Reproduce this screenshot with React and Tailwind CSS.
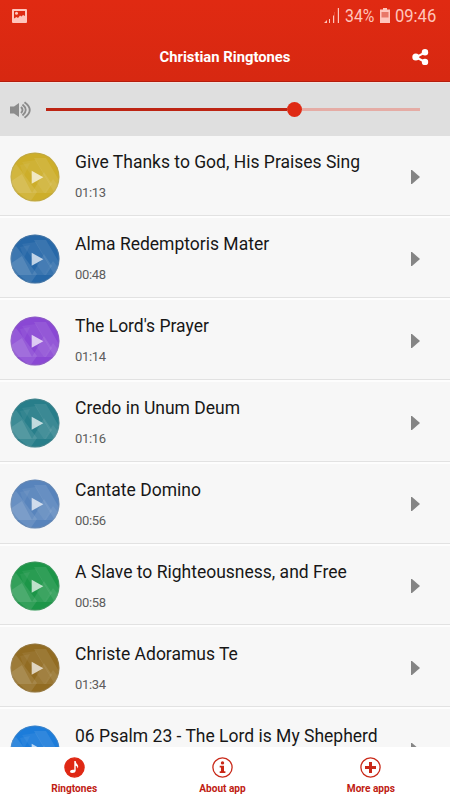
import React, { useState } from 'react';

const ringtones = [
  { title: 'Give Thanks to God, His Praises Sing', time: '01:13', color: '#cdae2a' },
  { title: 'Alma Redemptoris Mater', time: '00:48', color: '#2768a8' },
  { title: "The Lord's Prayer", time: '01:14', color: '#8a48d4' },
  { title: 'Credo in Unum Deum', time: '01:16', color: '#287e8a' },
  { title: 'Cantate Domino', time: '00:56', color: '#5884bc' },
  { title: 'A Slave to Righteousness, and Free', time: '00:58', color: '#1c9648' },
  { title: 'Christe Adoramus Te', time: '01:34', color: '#926c22' },
  { title: '06 Psalm 23 - The Lord is My Shepherd', time: '', color: '#1c7cda' },
];

function PlayButton({ color, id }) {
  return (
    <svg width="50" height="50" viewBox="0 0 50 50" className="shrink-0">
      <clipPath id={`disc-${id}`}>
        <circle cx="25" cy="25" r="24.5" />
      </clipPath>
      <g clipPath={`url(#disc-${id})`}>
        <rect width="50" height="50" fill={color} />
        <polygon points="0,18 6,12 27,40 20,50 10,42 0,30" fill="#fff" opacity="0.1" />
        <polygon points="0,30 12,22 22,41 0,41" fill="#fff" opacity="0.12" />
        <polygon points="24,6 36,6 50,30 50,40 44,40" fill="#fff" opacity="0.09" />
        <polygon points="12,10 26,8 40,32 34,41" fill="#fff" opacity="0.06" />
        <polygon points="22,41 34,20 42,32 36,41" fill="#fff" opacity="0.09" />
        <polygon points="34,41 43,27 50,36 48,41" fill="#fff" opacity="0.08" />
        <polygon points="10,13 20,11 14,24" fill="#fff" opacity="0.06" />
        <circle cx="25" cy="25" r="24" fill="none" stroke="#999" strokeWidth="1" opacity="0.3" />
      </g>
      <polygon points="21.7,18.8 33.3,25.3 21.7,31.8" fill="#fff" opacity="0.7" />
    </svg>
  );
}

function StatusBar() {
  return (
    <div className="flex h-[31px] items-center pl-3 pr-[13px] text-[#ffc5bc]">
      <svg width="15" height="14" viewBox="0 0 15 14" fill="currentColor">
        <path fillRule="evenodd" d="M1 0H14Q15 0 15 1V13Q15 14 14 14H1Q0 14 0 13V1Q0 0 1 0ZM2 2V9.5L4.5 8L6 9L8 6.5L9.5 7.5L11 6L13 7V2Z" />
        <circle cx="4.5" cy="4.3" r="1.5" />
      </svg>
      <div className="ml-auto flex items-center">
        <svg width="16" height="15" viewBox="0 0 16 15" fill="currentColor">
          <path d="M0 15L3 12V15ZM5 11H6V15H5ZM9 7.5H10V15H9ZM13.8 0H15V15H13.8Z" />
          <path d="M10.3 4H11V15H10.3Z" opacity="0.3" />
        </svg>
        <span className="ml-[5px] w-[30px] origin-left scale-x-[0.88] text-[18px] leading-[31px]">34%</span>
        <svg width="10" height="15" viewBox="0 0 10 15" className="ml-[5px]">
          <path d="M3 0H7V1.5H10V15H0V1.5H3Z" fill="#ffc5bc" />
          <path d="M1.5 4H8.5V9.5H1.5Z" fill="#e87768" />
        </svg>
        <span className="ml-[5px] w-[42px] origin-left scale-x-[0.92] text-[18px] leading-[31px]">09:46</span>
      </div>
    </div>
  );
}

function Header() {
  return (
    <header className="h-[82px] shrink-0 border-b border-[#b51c0c] bg-linear-to-b from-[#e02a12] to-[#d72811]">
      <StatusBar />
      <div className="flex h-[52px] items-center pr-[21px] pl-[38px]">
        <h1 className="flex-1 text-center text-[14.8px] font-bold text-white">Christian Ringtones</h1>
        <svg width="17" height="17" viewBox="0 0 17 17" fill="#fff">
          <path d="M13 3.5L4 8.2L13 13" fill="none" stroke="#fff" strokeWidth="2" />
          <circle cx="13" cy="3.3" r="3.2" />
          <circle cx="3.8" cy="8.1" r="3.5" />
          <circle cx="13" cy="12.9" r="3.2" />
        </svg>
      </div>
    </header>
  );
}

function VolumeBar({ volume }) {
  return (
    <div className="flex h-[54px] shrink-0 items-center border-t border-[#f0e4e2] bg-[#dfdfdf] pr-[30px] pl-[10px]">
      <svg width="21" height="18" viewBox="0 0 21 18">
        <path d="M0 5.5H4L9 2V16L4 12.5H0Z" fill="#8c8c8c" />
        <path d="M11 6Q14 9 11 12M12.5 3.5Q19 9 12.5 14.5M14.5 1.2Q25 9 14.5 16.8" fill="none" stroke="#8c8c8c" strokeWidth="1.9" />
      </svg>
      <div className="ml-[15px] flex flex-1 items-center">
        <div className="h-[2.5px] bg-[#bd2413]" style={{ width: `calc(${volume}% - 7.5px)` }} />
        <div className="size-[15px] rounded-full bg-[#df2a14]" />
        <div className="h-[2.5px] flex-1 bg-[#e5aca5]" />
      </div>
    </div>
  );
}

function RingtoneRow({ item, id }) {
  return (
    <li className="flex h-[81.9px] shrink-0 items-center border-t-2 border-b border-t-[#fdfdfd] border-b-[#e2e2e2] bg-[#f7f7f7] pt-[2.6px] pr-[30px] pl-[10px] first:h-[80px] first:border-t-0 first:pt-0.5">
      <PlayButton color={item.color} id={id} />
      <div className="ml-[15px] flex-1 pb-px whitespace-nowrap">
        <p className="text-[17.5px] leading-[22px] text-[#171717]">{item.title}</p>
        <p className="mt-3 h-4 text-[13px] leading-4 tracking-[-0.35px] text-[#5c5c5c]">{item.time}</p>
      </div>
      <svg width="9" height="14" viewBox="0 0 9 14">
        <path d="M0 0H1L9 7L1 14H0Z" fill="#858585" />
      </svg>
    </li>
  );
}

function TabIcon({ name }) {
  const active = name === 'ringtones';
  return (
    <svg width="21" height="21" viewBox="0 0 21 21">
      <circle cx="10.5" cy="10.5" r="9.6" fill={active ? '#df2814' : '#fff'} stroke={active ? '#df2814' : '#c92818'} strokeWidth="1.3" />
      {name === 'ringtones' && (
        <path d="M10.3 4H11.7Q11.8 6 13.4 7.5Q14.8 9 13.7 11.5Q13.4 9 11.7 8.7V14Q11.4 16 8.5 16Q6 16 6 14.5Q6 12.8 8.7 12.7H10.3Z" fill="#fff" />
      )}
      {name === 'about' && (
        <g fill="#c92818">
          <circle cx="10.5" cy="5.9" r="1.7" />
          <path d="M7.7 8.7H12V14.2H13.4V16H7.7V14.2H9V10.4H7.7Z" />
        </g>
      )}
      {name === 'more' && <path d="M9 5H12V9H16V12H12V16H9V12H5V9H9Z" fill="#c92818" />}
    </svg>
  );
}

const tabs = [
  { id: 'ringtones', label: 'Ringtones' },
  { id: 'about', label: 'About app' },
  { id: 'more', label: 'More apps' },
];

export default function App() {
  const [volume] = useState(66.5);

  return (
    <div className="flex h-[800px] w-[450px] flex-col overflow-hidden bg-white font-['Roboto',sans-serif]">
      <Header />
      <VolumeBar volume={volume} />
      <ul className="flex min-h-0 flex-1 flex-col overflow-hidden bg-[#f7f7f7]">
        {ringtones.map((item, i) => (
          <RingtoneRow key={item.title} item={item} id={i} />
        ))}
      </ul>
      <nav className="flex h-[53px] shrink-0 bg-white pr-[5px]">
        {tabs.map((tab) => (
          <button key={tab.id} className="flex flex-1 flex-col items-center pt-[10px]">
            <TabIcon name={tab.id} />
            <span className="mt-[5px] text-[10.1px] leading-3 font-bold text-[#c02012]">{tab.label}</span>
          </button>
        ))}
      </nav>
    </div>
  );
}
